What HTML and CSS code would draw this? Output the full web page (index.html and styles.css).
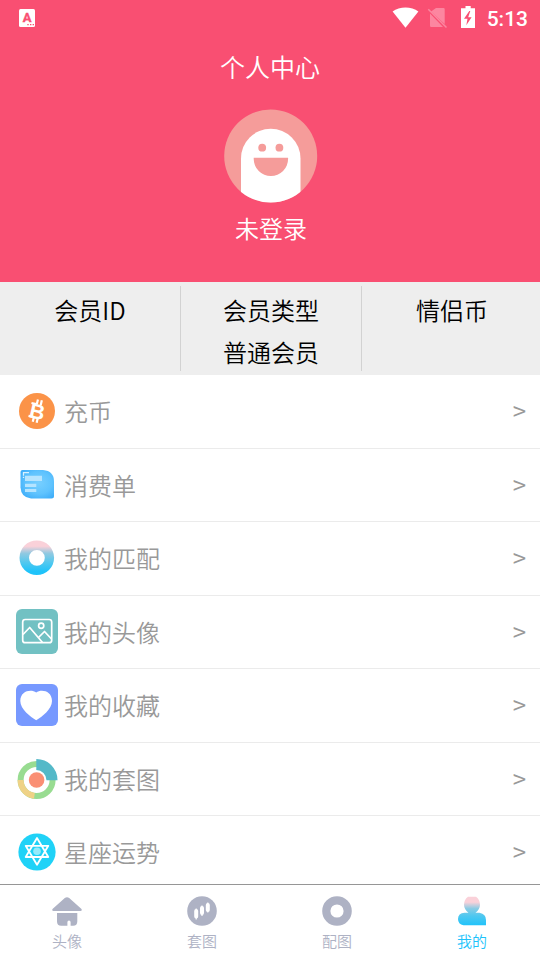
FILE: index.html
```html
<!DOCTYPE html>
<html lang="zh-CN">
<head>
<meta charset="utf-8">
<title>个人中心</title>
<link rel="stylesheet" href="styles.css">
</head>
<body>
<div class="app">
  <header class="header">
    <div class="status">
      <svg class="status-app" width="16" height="18" viewBox="0 0 16 18"><rect width="16" height="18" rx="1.5" fill="#fff"/><text x="8" y="13" class="status-letter">A</text><path d="M8.300 15.700h1.400M11 15.700h1.400M13.600 15.700h1.400" stroke="#f94f72" stroke-width="1.200"/></svg>
      <svg class="status-icons" width="90" height="30" viewBox="390 3 90 30">
        <path d="M405.500 27.700 392.600 11.500C399.500 6 411.500 6 418.400 11.500Z" fill="#fff"/>
        <path d="M436 8h7.500q1.200 0 1.200 1.200V24L431 11.500ZM430 13.500 443 27H431.200Q430 27 430 25.800Z" fill="#fc86a0"/>
        <path d="M428.300 9.300 446.500 27.500" stroke="#fc86a0" stroke-width="1.500"/>
        <path d="M465.500 6h5.200v2.200h4.300V28h-14V8.200h4.500Z" fill="#fff"/>
        <path d="M469.300 11 464 18.700h3.500L466.300 25.300 471.600 17.300H468.200L470.300 11Z" fill="#f94f72"/>
      </svg>
      <span class="time">5:13</span>
    </div>
    <h1 class="title">个人中心</h1>
    <svg class="avatar" width="94" height="94" viewBox="224 109 94 94">
      <defs><clipPath id="face"><circle cx="270.700" cy="156" r="46.500"/></clipPath></defs>
      <circle cx="270.700" cy="156" r="46.500" fill="#f59c9a"/>
      <path clip-path="url(#face)" d="M241 204V158.500a29.750 29.750 0 0 1 59.500 0V204Z" fill="#fff"/>
      <circle cx="262.200" cy="147.700" r="3.900" fill="#f59c9a"/><circle cx="279.400" cy="147.700" r="3.900" fill="#f59c9a"/>
      <path d="M253.700 157.700h34.400v1.100a17.200 17.200 0 0 1-34.400 0Z" fill="#f59c9a"/>
    </svg>
    <div class="login">未登录</div>
  </header>

  <section class="stats">
    <div class="stat"><span>会员ID</span></div>
    <div class="stat"><span>会员类型</span><span>普通会员</span></div>
    <div class="stat"><span>情侣币</span></div>
  </section>

  <main class="list">
    <div class="row">
      <svg class="icon" viewBox="16 388 42 46"><circle cx="37" cy="411" r="18" fill="#fb9348"/>
        <g transform="rotate(13 37 411)"><text x="37.500" y="418.700" class="coin">B</text><path d="M35.300 399.500v5M39.300 399.500v5M35.300 417.500v5M39.300 417.500v5M29.800 404.400h5M29.800 417.600h5" stroke="#fff" stroke-width="2.200"/></g></svg>
      <span class="label">充币</span><span class="arrow">&gt;</span>
    </div>
    <div class="row">
      <svg class="icon" viewBox="16 462 42 46">
        <defs><radialGradient id="card" cx=".55" cy=".45" r=".65"><stop offset="0" stop-color="#77cfff"/><stop offset=".6" stop-color="#5fc3fe"/><stop offset="1" stop-color="#3eadf9"/></radialGradient></defs>
        <path d="M22.500 470H43q11 1 11 11.500V496q0 2.500-2.500 2.500H31q-10-1-10.500-11V472q0-2 2-2Z" fill="url(#card)"/>
        <path d="M25 475.700h17v5.300H25ZM25 483.800h11.300v3.100H25ZM25 489h11.300v3.100H25Z" fill="#b5e4ff"/>
        <path d="M23.500 475.800V472.700H29M23.500 476.800v1.200" fill="none" stroke="#d8f2ff" stroke-width="1.300"/></svg>
      <span class="label">消费单</span><span class="arrow">&gt;</span>
    </div>
    <div class="row">
      <svg class="icon" viewBox="16 535 42 46">
        <defs><linearGradient id="ring" x1="0" y1="540" x2="0" y2="575" gradientUnits="userSpaceOnUse"><stop offset=".18" stop-color="#fad1d9"/><stop offset=".38" stop-color="#91c9e1"/><stop offset=".65" stop-color="#51c8ef"/><stop offset=".9" stop-color="#1fc3fa"/></linearGradient></defs>
        <path fill-rule="evenodd" fill="url(#ring)" d="M19.500 557.800a17.300 17.300 0 1 0 34.600 0a17.300 17.300 0 1 0-34.600 0M29 557.800a7.900 7.900 0 1 1 15.800 0a7.900 7.900 0 1 1-15.800 0"/></svg>
      <span class="label">我的匹配</span><span class="arrow">&gt;</span>
    </div>
    <div class="row">
      <svg class="icon" viewBox="16 609 42 46"><rect x="16" y="609" width="42" height="45" rx="6" fill="#72c1c3"/>
        <g fill="none" stroke="#fff" stroke-width="1.700" stroke-linejoin="round"><rect x="22.700" y="619.500" width="29" height="23.200" rx="2.500"/><circle cx="41.200" cy="625.800" r="2.600"/><path d="M23 634.500 29.700 627.500 42.500 642.500M38.500 637.500 44.500 631.500 51.500 639"/></g></svg>
      <span class="label">我的头像</span><span class="arrow">&gt;</span>
    </div>
    <div class="row">
      <svg class="icon" viewBox="16 682 42 46"><rect x="16" y="684" width="42" height="42" rx="6" fill="#7799ff"/>
        <path d="M36.200 692.500C41 688.800 52 690.500 52 701C52 709.500 42 716.500 36.200 720.300C30.500 716.500 20.300 709.500 20.300 701C20.300 690.500 31.400 688.800 36.200 692.500Z" fill="#fff"/></svg>
      <span class="label">我的收藏</span><span class="arrow">&gt;</span>
    </div>
    <div class="row">
      <svg class="icon" viewBox="16 756 42 46"><g fill="none" stroke-width="6">
        <circle cx="36.600" cy="780" r="16" stroke="#98dc91"/><path d="M34.400 795.850A16 16 0 0 1 20.600 780" stroke="#efd286"/></g>
        <path d="M36.300 759A21 21 0 0 1 57.500 780.200H46.500A10.300 10.300 0 0 0 36.300 770Z" fill="#54b9c8"/><circle cx="36.600" cy="780" r="7.800" fill="#fa8f74"/></svg>
      <span class="label">我的套图</span><span class="arrow">&gt;</span>
    </div>
    <div class="row">
      <svg class="icon" viewBox="16 829 42 46"><circle cx="37" cy="852" r="18.600" fill="#20d2f7"/><circle cx="37" cy="851.300" r="3.800" fill="#95ebfb"/>
        <path d="M37 838 48.300 857H25.700ZM37 864.800 48.300 845.800H25.700Z" fill="none" stroke="#fff" stroke-width="1.800" stroke-linejoin="round"/></svg>
      <span class="label">星座运势</span><span class="arrow">&gt;</span>
    </div>
  </main>

  <nav class="tabs">
    <div class="tab"><svg class="tab-icon" viewBox="52 895 30 32"><path d="M64.800 898q2.200-1.500 4.400 0L81.500 909q.8 2-1 2H53.500q-1.800 0-1-2ZM57 913H77.300V921.500q0 4.200-4.200 4.200H70.600V922.200q0-1.700-1.600-1.700t-1.600 1.700v3.500H61.200q-4.200 0-4.200-4.200Z" fill="#aeb2c4"/></svg><span>头像</span></div>
    <div class="tab"><svg class="tab-icon" viewBox="187 895 30 32"><circle cx="202" cy="911" r="14.800" fill="#aeb2c4"/><path d="M196.200 908.500v11M202 905.500v10.500M207.800 902.500v10" stroke="#fff" stroke-width="1.200"/><path d="M196.200 911v5.500M202 908v5M207.800 905v5" stroke="#fff" stroke-width="4" stroke-linecap="round"/></svg><span>套图</span></div>
    <div class="tab"><svg class="tab-icon" viewBox="322 895 30 32"><circle cx="337" cy="911" r="10.700" fill="none" stroke="#aeb2c4" stroke-width="8.200"/></svg><span>配图</span></div>
    <div class="tab active"><svg class="tab-icon" viewBox="457 895 30 32">
      <defs><linearGradient id="user" x1="0" y1="897" x2="0" y2="926" gradientUnits="userSpaceOnUse"><stop offset=".18" stop-color="#fad1d9"/><stop offset=".4" stop-color="#89cbe4"/><stop offset=".65" stop-color="#4fc8f0"/><stop offset="1" stop-color="#1dc3fb"/></linearGradient></defs>
      <path d="M468 896.700H476Q480 899.500 480 904.700Q480 909 475.500 912.800H479.500Q486 914 486 920V925.300H463.500Q458 924.500 458 919Q458 913.300 464.500 912.800H468.500Q464 909 464 904.700Q464 899.500 468 896.700Z" fill="url(#user)"/></svg><span>我的</span></div>
  </nav>
</div>
</body>
</html>
```
FILE: styles.css
```css
* { box-sizing: border-box; }
body {
  margin: 0;
  font-family: "Noto Sans CJK SC", sans-serif;
  font-weight: 350;
  background: #fff;
}
.app {
  width: 540px;
  height: 960px;
  display: flex;
  flex-direction: column;
  overflow: hidden;
}
.header {
  height: 282px;
  flex: none;
  display: flex;
  flex-direction: column;
  align-items: center;
  background: #f94f72;
  color: #fff;
}
.status {
  width: 100%;
  height: 36px;
  display: flex;
  align-items: center;
  padding: 0 12px 0 19px;
}
.status-icons { margin-left: auto; }
.status-letter {
  font: bold 13px Roboto, sans-serif;
  fill: #f94f72;
  stroke: #f94f72;
  stroke-width: .4px;
  text-anchor: middle;
}
.time {
  width: 48px;
  text-align: right;
  font: 500 21px/36px Roboto, sans-serif;
  padding-top: 2px;
  white-space: nowrap;
}
.title {
  margin: 12px 0 0;
  font-size: 25px;
  line-height: 36px;
  font-weight: inherit;
}
.avatar { margin: 25px 0 0 1px; flex: none; }
.login {
  margin: 7px 0 0 2px;
  font-size: 24px;
  line-height: 36px;
}
.stats {
  flex: none;
  height: 93px;
  padding: 4px 0;
  display: grid;
  grid-template-columns: 181px 181px 178px;
  grid-template-rows: 85px;
  background: #eee;
  color: #000;
}
.stat {
  display: flex;
  flex-direction: column;
  align-items: center;
  padding-top: 3px;
  font-size: 24px;
  line-height: 42px;
  border-right: 1px solid #d2d2d2;
}
.stat span { height: 42px; flex: none; }
.stat:last-child { border-right: 0; padding-left: 2px; }
.list { height: 509px; flex: none; overflow: hidden; }
.row {
  height: 74px;
  display: flex;
  align-items: flex-start;
  padding: 13px 14px 0 16px;
  border-bottom: 1px solid #ebebeb;
  color: #999;
}
.row:nth-child(even) { height: 73px; }
.icon { width: 42px; height: 46px; flex: none; }
.coin {
  font: bold 21px "Liberation Sans", sans-serif;
  fill: #fff;
  text-anchor: middle;
}
.label {
  margin: 5px 0 0 6px;
  font-size: 24px;
  line-height: 36px;
}
.arrow {
  margin: 4px 0 0 auto;
  font-size: 24px;
  line-height: 36px;
  font-weight: 400;
}
.tabs {
  flex: none;
  height: 76px;
  border-top: 1px solid #969696;
  display: grid;
  grid-template-columns: repeat(4, 1fr);
}
.tab {
  display: flex;
  flex-direction: column;
  align-items: center;
  padding: 10px 1px 0 0;
  color: #aeb2c4;
  font-size: 15px;
  line-height: 22px;
}
.tab-icon { width: 30px; height: 32px; margin-bottom: 3px; }
.active { color: #1dc3fb; }
```
